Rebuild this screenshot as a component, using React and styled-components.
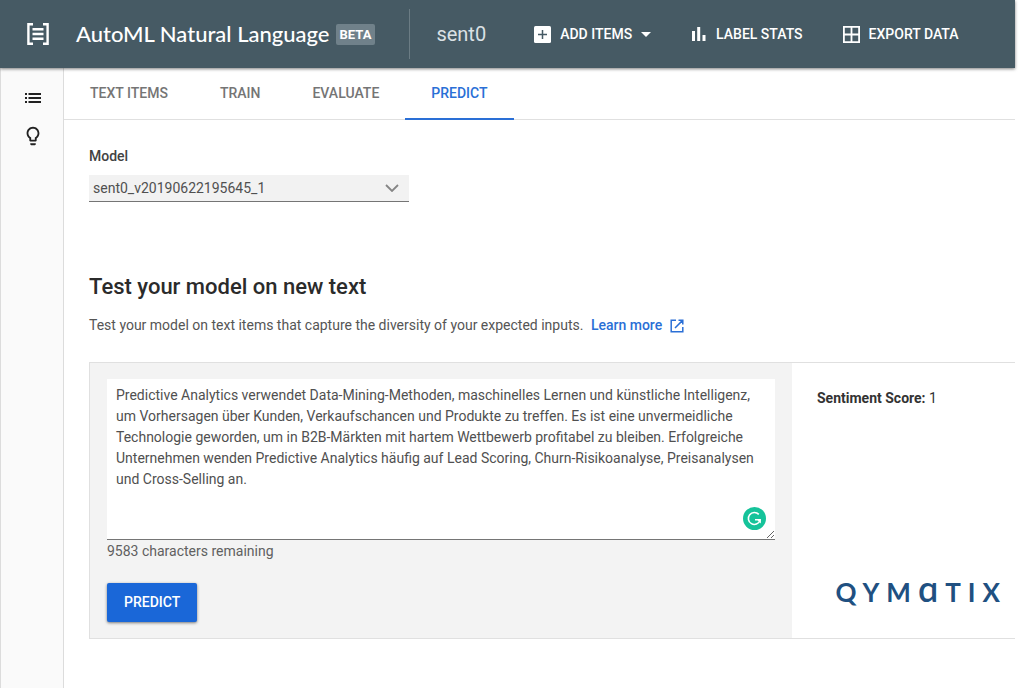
import React, { useState } from "react";
import styled, { createGlobalStyle } from "styled-components";

const Global = createGlobalStyle`
  *, *::before, *::after { box-sizing: border-box; }
  body {
    margin: 0;
    background: #fff;
    color: #424242;
    font-family: Roboto, "Liberation Sans", sans-serif;
    font-size: 14px;
    line-height: 21px;
  }
`;

const Page = styled.div`
  display: flex;
  flex-direction: column;
  min-height: 100vh;
  margin-right: 9px;
`;

const Header = styled.header`
  display: flex;
  align-items: center;
  height: 68px;
  padding-left: 26px;
  background: #465a64;
  color: #fff;
  box-shadow: 0 1px 3px rgba(0, 0, 0, 0.5);
  z-index: 1;
`;

const ProductName = styled.h1`
  margin: 0 6px 0 26px;
  font-family: Lato, Roboto, sans-serif;
  font-size: 22px;
  line-height: 28px;
  font-weight: 500;
  white-space: nowrap;
`;

const Badge = styled.span`
  padding: 0 4px;
  border-radius: 2px;
  background: #70818a;
  font-size: 13px;
  font-weight: 700;
`;

const Dataset = styled.div`
  display: flex;
  align-items: center;
  height: 50px;
  margin-left: 34px;
  padding: 0 48px 0 26px;
  border-left: 1px solid #6b7c84;
  color: #dbe1e4;
  font-size: 20px;
`;

const Actions = styled.div`
  display: flex;
  align-items: center;
  gap: 40px;
`;

const Action = styled.button`
  display: flex;
  align-items: center;
  gap: 9px;
  padding: 0;
  border: 0;
  background: none;
  color: #fff;
  font: 500 14px/21px Roboto, sans-serif;
  white-space: nowrap;
  cursor: pointer;
`;

const Body = styled.div`
  display: flex;
  flex: 1;
`;

const Rail = styled.nav`
  display: flex;
  flex-direction: column;
  align-items: center;
  gap: 16px;
  flex: 0 0 64px;
  padding: 19px 0 0 2px;
  border: solid #dcdcdc;
  border-width: 0 1px;
  background: #fafafa;
`;

const RailButton = styled.button`
  display: flex;
  padding: 0;
  border: 0;
  background: none;
  color: #212121;
  cursor: pointer;
`;

const Main = styled.main`
  flex: 1;
  min-width: 0;
`;

const Tabs = styled.nav`
  display: flex;
  height: 52px;
  border-bottom: 1px solid #e0e0e0;
`;

const Tab = styled.a`
  display: flex;
  align-items: center;
  height: 52px;
  padding: 0 26px;
  border-bottom: 2px solid ${(p) => (p.$active ? "#2a6fd6" : "transparent")};
  color: ${(p) => (p.$active ? "#2a6fd6" : "#757575")};
  font-weight: 500;
  text-decoration: none;
`;

const Content = styled.div`
  padding: 26px 0 40px 25px;
`;

const FieldLabel = styled.label`
  display: block;
  margin-bottom: 8px;
  font-weight: 500;
`;

const SelectWrap = styled.div`
  display: flex;
  align-items: center;
  width: 320px;
  border-bottom: 1px solid #757575;
  background: #f2f2f2;
  color: #858585;
`;

const Select = styled.select`
  flex: 1;
  height: 26px;
  margin-right: -24px;
  padding: 0 24px 0 4px;
  border: 0;
  appearance: none;
  background: transparent;
  color: #505050;
  font: 400 14px/21px Roboto, sans-serif;
`;

const Chevron = styled.svg`
  flex: none;
  margin-right: 10px;
  pointer-events: none;
`;

const Title = styled.h2`
  margin: 71px 0 14px;
  color: #2b2b2b;
  font-size: 22px;
  line-height: 28px;
  font-weight: 500;
`;

const Intro = styled.p`
  margin: 0 0 26px;
  color: #555;
`;

const LearnMore = styled.a`
  display: inline-flex;
  align-items: center;
  gap: 8px;
  margin-left: 4px;
  color: #2a6fd6;
  font-weight: 500;
  text-decoration: none;
`;

const Panel = styled.section`
  display: grid;
  grid-template-columns: minmax(0, 1fr) 223px;
  border: solid #e0e0e0;
  border-width: 1px 0 1px 1px;
`;

const InputPane = styled.form`
  padding: 16px 17px;
  background: #f3f3f3;
`;

const TextBox = styled.div`
  position: relative;
`;

const TextArea = styled.textarea`
  display: block;
  width: 100%;
  height: 161px;
  padding: 6px 16px 4px 9px;
  border: 0;
  border-bottom: 1px solid #757575;
  outline: 0;
  resize: vertical;
  background: #fff;
  color: #505050;
  font: 400 14px/21px Roboto, sans-serif;
`;

const Checker = styled.svg`
  position: absolute;
  right: 9px;
  bottom: 10px;
`;

const Counter = styled.div`
  margin: 1px 0 21px;
  color: #606060;
`;

const Submit = styled.button`
  height: 39px;
  padding: 0 17px;
  border: 0;
  border-radius: 2px;
  background: #1a67d8;
  box-shadow: 0 1px 3px rgba(0, 0, 0, 0.5);
  color: #fff;
  font: 500 14px/21px Roboto, sans-serif;
  cursor: pointer;
`;

const ResultPane = styled.div`
  display: flex;
  flex-direction: column;
  justify-content: space-between;
  padding: 25px 8px 28px 25px;
`;

const Score = styled.div`
  color: #333;
`;

const Brand = styled.div`
  align-self: flex-end;
  color: #205081;
  font-family: Lato, sans-serif;
  font-size: 26px;
  line-height: 36px;
  font-weight: 700;
  letter-spacing: 7px;
  white-space: nowrap;
`;

const BrandAlpha = styled.span`
  font-size: 36px;
  line-height: 1;
  font-weight: 600;
`;

const SAMPLE =
  "Predictive Analytics verwendet Data-Mining-Methoden, maschinelles Lernen und künstliche Intelligenz, um Vorhersagen über Kunden, Verkaufschancen und Produkte zu treffen. Es ist eine unvermeidliche Technologie geworden, um in B2B-Märkten mit hartem Wettbewerb profitabel zu bleiben. Erfolgreiche Unternehmen wenden Predictive Analytics häufig auf Lead Scoring, Churn-Risikoanalyse, Preisanalysen und Cross-Selling an.";

const TABS = ["TEXT ITEMS", "TRAIN", "EVALUATE", "PREDICT"];

export default function App() {
  const [text, setText] = useState(SAMPLE);
  return (
    <>
      <Global />
      <Page>
        <Header>
          <svg width="24" height="24" viewBox="0 0 24 24" fill="none" stroke="#fff" strokeWidth="2.4">
            <path d="M7 2.2H2.4v19.6H7M17 2.2h4.600v19.600H17M6.500 7.200h11M6.500 12h11M6.500 16.800h11" />
          </svg>
          <ProductName>AutoML Natural Language</ProductName>
          <Badge>BETA</Badge>
          <Dataset>sent0</Dataset>
          <Actions>
            <Action type="button">
              <svg width="17" height="17" viewBox="0 0 17 17">
                <rect width="17" height="17" rx="1.500" fill="#fff" />
                <path d="M8.500 4v9M4 8.500h9" stroke="#465a64" strokeWidth="1.500" />
              </svg>
              ADD ITEMS
              <svg width="10" height="5" viewBox="0 0 10 5" fill="#fff">
                <path d="M0 0h10L5 5z" />
              </svg>
            </Action>
            <Action type="button">
              <svg width="16" height="14" viewBox="0 0 16 14" fill="#fff">
                <path d="M1 4h3v10H1zM6.200 0h3v14h-3zM11.500 8h3v6h-3z" />
              </svg>
              LABEL STATS
            </Action>
            <Action type="button">
              <svg width="17" height="17" viewBox="0 0 17 17" fill="none" stroke="#fff" strokeWidth="1.800">
                <path d="M.9.9h15.200v15.200H.9zM8.500 1v15M1 8.500h15" />
              </svg>
              EXPORT DATA
            </Action>
          </Actions>
        </Header>
        <Body>
          <Rail>
            <RailButton type="button" aria-label="Datasets">
              <svg width="22" height="22" viewBox="0 0 22 22" fill="currentColor">
                <path d="M3 6h2v2H3zM3 10h2v2H3zM3 14h2v2H3zM6.500 6H19v2H6.500zM6.500 10H19v2H6.500zM6.500 14H19v2H6.500z" />
              </svg>
            </RailButton>
            <RailButton type="button" aria-label="Tips">
              <svg width="22" height="22" viewBox="0 0 24 24" fill="currentColor">
                <path d="M9 21c0 .55.45 1 1 1h4c.55 0 1-.45 1-1v-1H9v1zm3-19C8.140 2 5 5.140 5 9c0 2.380 1.190 4.470 3 5.740V17c0 .55.45 1 1 1h6c.55 0 1-.45 1-1v-2.260c1.810-1.270 3-3.360 3-5.740 0-3.860-3.140-7-7-7zm2.850 11.100l-.85.6V16h-4v-2.300l-.85-.6C7.800 12.160 7 10.630 7 9c0-2.760 2.240-5 5-5s5 2.240 5 5c0 1.630-.8 3.160-2.150 4.100z" />
              </svg>
            </RailButton>
          </Rail>
          <Main>
            <Tabs>
              {TABS.map((name) => (
                <Tab key={name} href="#" $active={name === "PREDICT"}>
                  {name}
                </Tab>
              ))}
            </Tabs>
            <Content>
              <FieldLabel htmlFor="model">Model</FieldLabel>
              <SelectWrap>
                <Select id="model">
                  <option>sent0_v20190622195645_1</option>
                </Select>
                <Chevron width="14" height="8" viewBox="0 0 14 8" fill="none" stroke="currentColor" strokeWidth="1.800">
                  <path d="M1 1l6 6 6-6" />
                </Chevron>
              </SelectWrap>
              <Title>Test your model on new text</Title>
              <Intro>
                Test your model on text items that capture the diversity of your expected inputs.{" "}
                <LearnMore href="#">
                  Learn more
                  <svg width="14" height="14" viewBox="0 0 14 14" fill="none" stroke="currentColor" strokeWidth="1.500">
                    <path d="M6 1.200H1.200v11.600h11.600V8M8.500 1.200h4.300v4.300M12.600 1.400L5 9" />
                  </svg>
                </LearnMore>
              </Intro>
              <Panel>
                <InputPane onSubmit={(e) => e.preventDefault()}>
                  <TextBox>
                    <TextArea
                      aria-label="Text to analyse"
                      spellCheck={false}
                      value={text}
                      onChange={(e) => setText(e.target.value)}
                    />
                    <Checker width="23" height="23" viewBox="0 0 23 23" fill="none">
                      <circle cx="11.500" cy="11.500" r="11.500" fill="#15c39a" />
                      <path d="M15.800 7.400A6 6 0 1 0 17 13.500M12 12.700h5.400" stroke="#fff" strokeWidth="1.600" />
                      <path d="M13.500 12h4.400v4.600z" fill="#fff" />
                    </Checker>
                  </TextBox>
                  <Counter>9583 characters remaining</Counter>
                  <Submit type="submit">PREDICT</Submit>
                </InputPane>
                <ResultPane>
                  <Score>
                    <strong>Sentiment Score:</strong> 1
                  </Score>
                  <Brand>
                    QYM<BrandAlpha>ɑ</BrandAlpha>TIX
                  </Brand>
                </ResultPane>
              </Panel>
            </Content>
          </Main>
        </Body>
      </Page>
    </>
  );
}
